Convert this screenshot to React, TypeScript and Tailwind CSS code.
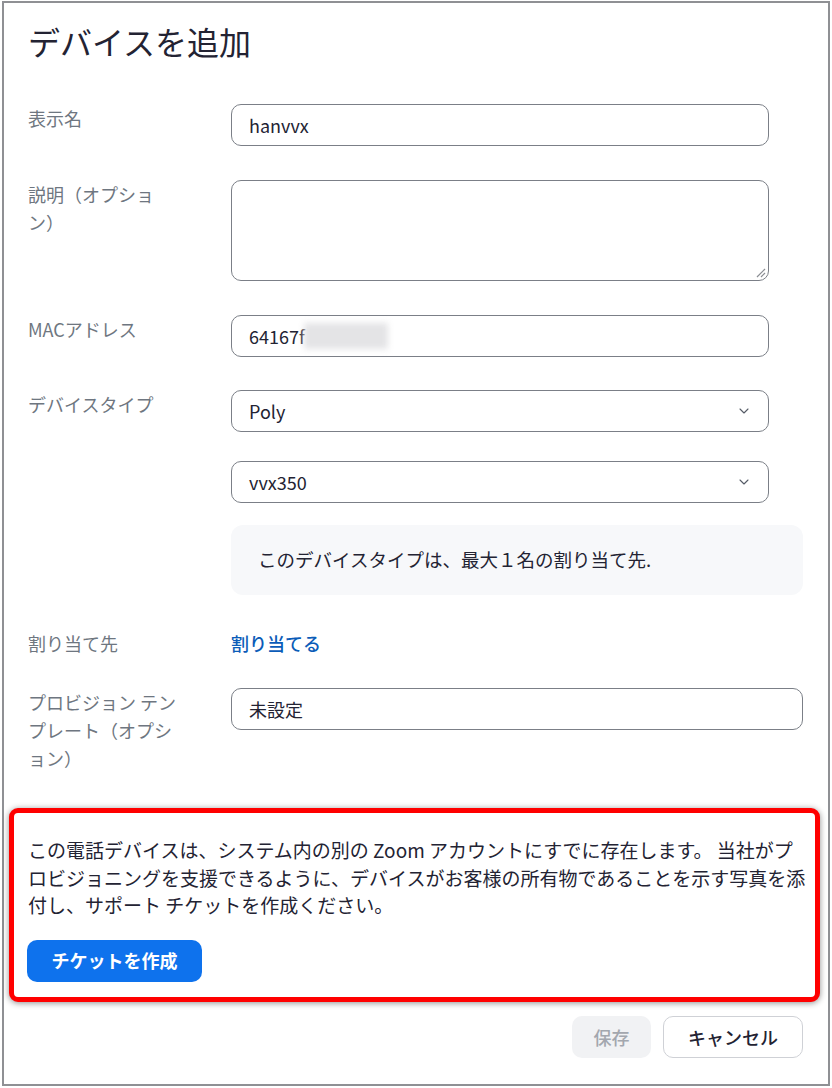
import React from 'react';
import { ChevronDown } from 'lucide-react';

const font = { fontFamily: '"Noto Sans CJK JP", "Noto Sans", sans-serif' };

function Label({ children }: { children: React.ReactNode }) {
  return (
    <div className="w-[150px] shrink-0 mr-[53px] text-[18px] leading-[28px] text-[#6e7680]">
      {children}
    </div>
  );
}

function Field({ value, wide = false, select = false, children }: { value: string; wide?: boolean; select?: boolean; children?: React.ReactNode }) {
  return (
    <div
      className={`relative flex items-center h-[42px] ${wide ? 'w-[572px]' : 'w-[538px]'} rounded-[10px] border-[1.5px] border-[#7b7f87] bg-white pl-[17px] pr-[16px] text-[18px] text-[#232333]`}
    >
      <span className="flex-1">{value}</span>
      {select && <ChevronDown size={16} strokeWidth={1.6} className="text-[#555b66]" />}
      {children}
    </div>
  );
}

export default function App() {
  return (
    <div className="bg-white w-[832px] h-[1088px]" style={font}>
      <div className="ml-[2px] mt-[1px] w-[828px] h-[1085px] border-2 border-[#8f9094] pl-[24px] pt-[16px]">
        {/* Title */}
        <h1 className="text-[32px] leading-[44px] text-[#232333] font-normal">デバイスを追加</h1>

        {/* Display name */}
        <div className="flex mt-[41px]">
          <Label>表示名</Label>
          <Field value="hanvvx" />
        </div>

        {/* Description */}
        <div className="flex mt-[34px]">
          <Label>説明（オプション）</Label>
          <div className="relative w-[538px] h-[101px] rounded-[10px] border-[1.5px] border-[#7b7f87] bg-white">
            <svg className="absolute right-[2px] bottom-[2px]" width="12" height="12" viewBox="0 0 12 12">
              <line x1="11" y1="3" x2="3" y2="11" stroke="#8a8d93" strokeWidth="1.2" />
              <line x1="11" y1="7" x2="7" y2="11" stroke="#8a8d93" strokeWidth="1.2" />
            </svg>
          </div>
        </div>

        {/* MAC */}
        <div className="flex mt-[34px]">
          <Label>MACアドレス</Label>
          <Field value="64167f">
            <div className="absolute left-[72px] top-[7px] w-[84px] h-[26px] bg-[#e4e4e6] blur-[3px]" />
          </Field>
        </div>

        {/* Device type */}
        <div className="flex mt-[33px]">
          <Label>デバイスタイプ</Label>
          <div className="flex flex-col">
            <Field value="Poly" select />
            <div className="mt-[29px]">
              <Field value="vvx350" select />
            </div>
            <div className="mt-[22px] w-[572px] h-[70px] rounded-[12px] bg-[#f7f8fa] flex items-center pl-[27px] text-[18.5px] text-[#232333]">
              このデバイスタイプは、最大１名の割り当て先.
            </div>
          </div>
        </div>

        {/* Assignee */}
        <div className="flex mt-[34px]">
          <Label>割り当て先</Label>
          <span className="text-[18px] leading-[28px] font-medium text-[#0b5cb8]">割り当てる</span>
        </div>

        {/* Provision template */}
        <div className="flex mt-[31px]">
          <Label>プロビジョン テンプレート（オプション）</Label>
          <Field value="未設定" wide />
        </div>

        {/* Warning (highlighted) */}
        <div className="mt-[36px] -ml-[19px] w-[811px] h-[194px] rounded-[9px] border-[5px] border-[#ff0000] bg-white shadow-[0_1px_6px_rgba(0,0,0,0.45)] pl-[14px] pr-[6px] pt-[23px]">
          <p className="text-[19px] leading-[27.5px] text-[#232333]">
            この電話デバイスは、システム内の別の Zoom アカウントにすでに存在します。 当社がプロビジョニングを支援できるように、デバイスがお客様の所有物であることを示す写真を添付し、サポート チケットを作成ください。
          </p>
          <button
            type="button"
            className="mt-[21px] h-[42px] w-[175px] -ml-[1px] rounded-[10px] bg-[#0e72ed] text-white text-[18px] font-bold"
          >
            チケットを作成
          </button>
        </div>

        {/* Footer */}
        <div className="flex justify-end gap-[12px] mt-[14px] w-[775px]">
          <button type="button" className="h-[42px] w-[79px] rounded-[10px] bg-[#f1f2f4] text-[18px] text-[#a3a7ae] font-medium">
            保存
          </button>
          <button type="button" className="h-[42px] w-[140px] rounded-[10px] border border-[#cfd1d6] bg-white text-[18px] text-[#232333] font-medium">
            キャンセル
          </button>
        </div>
      </div>
    </div>
  );
}
